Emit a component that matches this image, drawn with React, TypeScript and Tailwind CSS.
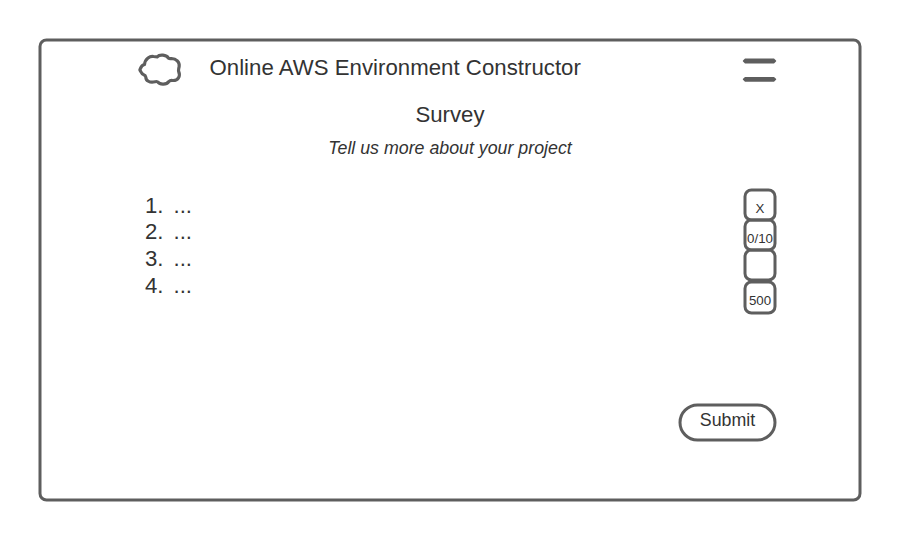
import React from "react";

const questions = ["...", "...", "...", "..."];

const answers = [
  { value: "X", style: "h-[33px] pt-[7px]" },
  { value: "0/10", style: "-mt-[3px] h-[33px] pt-[7px]" },
  { value: "", style: "-mt-[3px] h-[33px] pt-[7px]" },
  { value: "500", style: "-mt-px h-[34px] pt-[5px]" },
];

function CloudLogo() {
  return (
    <svg
      className="h-[50px] w-[60px] shrink-0"
      viewBox="0 0 180 150"
      fill="none"
      stroke="#5e5e5e"
      strokeWidth="9.5"
      strokeLinejoin="round"
      strokeLinecap="round"
    >
      <path d="M45 60C47 42 62 34 72 36Q78 37 83 37C90 29 111 30 117 41Q120 43 126 42C140 42 151 53 149 66Q147 73 147 79C154 96 146 109 129 108Q122 107 118 111C111 121 92 122 84 112Q80 110 76 112C60 116 49 108 49 98Q48 92 43 91C35 88 35 82 31 76C34 70 35 62 45 60Z" />
    </svg>
  );
}

function MenuIcon() {
  return (
    <svg className="mt-[15.5px] h-[26px] w-[34px]" viewBox="0 0 34 26">
      <path d="M0 3.5L2.5 1.1H31.5L34 3.5L31.5 5.9H2.5Z" fill="#5e5e5e" />
      <path d="M0 21.8L2.5 19.4H31.5L34 21.8L31.5 24.2H2.5Z" fill="#5e5e5e" />
    </svg>
  );
}

export default function App() {
  return (
    <div className="h-[540px] w-[900px] bg-white pt-[39px] pl-[39px] font-['Liberation_Sans',Arial,sans-serif] text-[#333333]">
      <main className="flex h-[463px] w-[823px] -translate-x-[0.5px] -translate-y-[0.5px] flex-col rounded-[8px] border-[3px] border-[#5e5e5e]">
        <header className="flex h-[58px] items-start pr-[82px] pl-[88px]">
          <div className="pt-[3px]">
            <CloudLogo />
          </div>
          <h1 className="mt-[11.5px] ml-[20px] flex-1 text-[22.2px] leading-[27px] tracking-[0.03px] whitespace-nowrap">
            Online AWS Environment Constructor
          </h1>
          <MenuIcon />
        </header>
        <section className="flex flex-col items-center">
          <h2 className="mt-[0.5px] text-[22.2px] leading-[27px]">Survey</h2>
          <p className="mt-[10px] text-[17.8px] leading-[21px] italic">
            Tell us more about your project
          </p>
        </section>
        <section className="mt-[30.5px] flex justify-between pr-[82px] pl-[103.5px]">
          <ol className="mt-[3.6px] text-[22.2px] leading-[26.67px]">
            {questions.map((question, i) => (
              <li key={i} className="flex">
                <span className="w-[28.5px]">{i + 1}.</span>
                <span>{question}</span>
              </li>
            ))}
          </ol>
          <div className="flex flex-col">
            {answers.map((answer, i) => (
              <div
                key={i}
                className={`flex w-[33px] shrink-0 items-center justify-center rounded-[8px] border-[3px] border-[#5e5e5e] text-[13.3px] leading-[16px] ${answer.style}`}
              >
                {answer.value}
              </div>
            ))}
          </div>
        </section>
        <div className="mt-[89px] flex justify-end pr-[82px]">
          <button className="flex h-[38px] w-[98px] items-start justify-center rounded-full border-[3px] border-[#5e5e5e] pt-[3px] text-[17.8px] leading-[21px]">
            Submit
          </button>
        </div>
      </main>
    </div>
  );
}
